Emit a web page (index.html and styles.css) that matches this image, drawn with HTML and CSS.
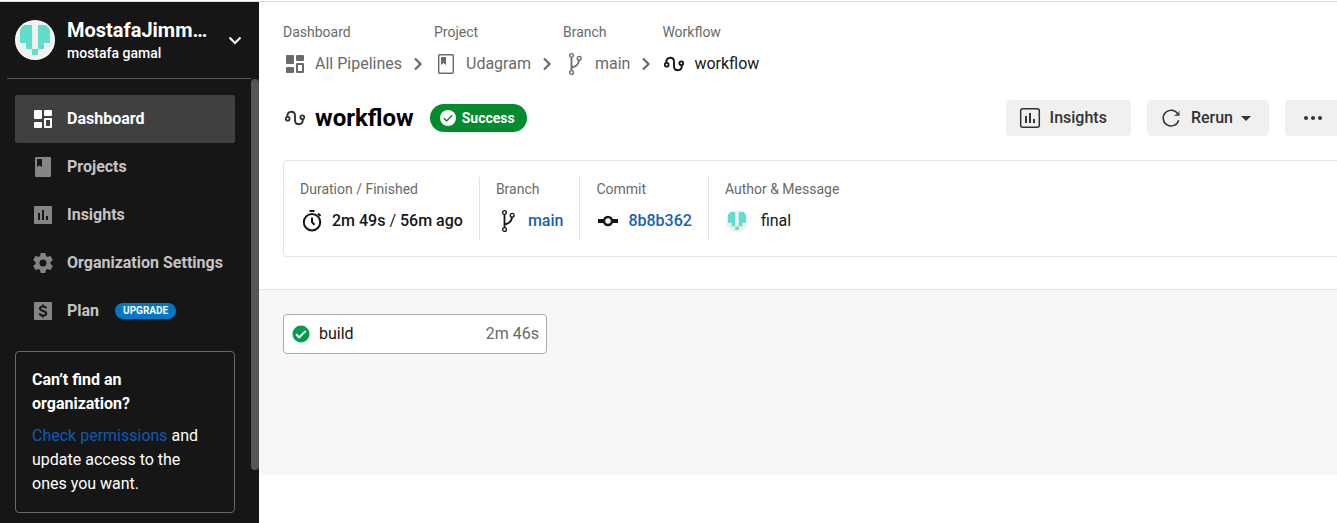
FILE: index.html
```html
<!DOCTYPE html>
<html lang="en">
<head>
<meta charset="utf-8">
<title>workflow - Udagram</title>
<link rel="stylesheet" href="styles.css">
</head>
<body>
<svg class="defs" aria-hidden="true">
  <symbol id="dashboard" viewBox="0 0 24 24"><path fill="currentColor" d="M4 3h6a1 1 0 0 1 1 1v7a1 1 0 0 1-1 1H4a1 1 0 0 1-1-1V4a1 1 0 0 1 1-1zm10 0h6a1 1 0 0 1 1 1v4a1 1 0 0 1-1 1h-6a1 1 0 0 1-1-1V4a1 1 0 0 1 1-1zM4 15h6a1 1 0 0 1 1 1v4a1 1 0 0 1-1 1H4a1 1 0 0 1-1-1v-4a1 1 0 0 1 1-1z"/><path fill="currentColor" fill-rule="evenodd" d="M14 11h6a1 1 0 0 1 1 1v8a1 1 0 0 1-1 1h-6a1 1 0 0 1-1-1v-8a1 1 0 0 1 1-1zm1 2v6h4v-6z"/></symbol>
  <symbol id="project-solid" viewBox="0 0 24 24"><path fill="currentColor" fill-rule="evenodd" d="M5 2h14a1 1 0 0 1 1 1v18a1 1 0 0 1-1 1H5a1 1 0 0 1-1-1V3a1 1 0 0 1 1-1zm1 2v8l2.500-1.500L11 12V4z"/></symbol>
  <symbol id="project" viewBox="0 0 24 24"><rect x="4.700" y="2.700" width="14.600" height="18.600" rx="1" fill="none" stroke="currentColor" stroke-width="1.400"/><path fill="currentColor" d="M7 5h5v8l-2.500-2L7 13z"/></symbol>
  <symbol id="chart-solid" viewBox="0 0 24 24"><path fill="currentColor" fill-rule="evenodd" d="M4 3h16a1 1 0 0 1 1 1v16a1 1 0 0 1-1 1H4a1 1 0 0 1-1-1V4a1 1 0 0 1 1-1zm3 7v7h2v-7zm4-3v10h2V7zm4 6v4h2v-4z"/></symbol>
  <symbol id="chart" viewBox="0 0 24 24"><rect x="2.700" y="2.700" width="18.600" height="18.600" rx="2" fill="none" stroke="currentColor" stroke-width="1.500"/><path fill="currentColor" d="M7 10h2v7H7zm4-3h2v10h-2zm4 6h2v4h-2z"/></symbol>
  <symbol id="gear" viewBox="0 0 24 24"><path fill="currentColor" d="M19.430 12.980c.04-.32.07-.64.07-.98s-.03-.66-.07-.98l2.110-1.650c.19-.15.24-.42.12-.64l-2-3.460c-.12-.22-.39-.3-.61-.22l-2.490 1c-.52-.4-1.080-.73-1.690-.98l-.38-2.650A.49.49 0 0 0 14 2h-4c-.25 0-.46.18-.49.42l-.38 2.650c-.61.25-1.170.59-1.690.98l-2.490-1c-.23-.09-.49 0-.61.22l-2 3.460c-.13.22-.07.49.12.64l2.110 1.650c-.04.32-.07.65-.07.98s.03.66.07.98l-2.110 1.650c-.19.15-.24.42-.12.64l2 3.460c.12.22.39.3.61.22l2.490-1c.52.4 1.080.73 1.690.98l.38 2.650c.03.24.24.42.49.42h4c.25 0 .46-.18.49-.42l.38-2.650c.61-.25 1.170-.59 1.690-.98l2.490 1c.23.09.49 0 .61-.22l2-3.460c.12-.22.07-.49-.12-.64zM12 15.500a3.500 3.500 0 1 1 0-7 3.500 3.500 0 0 1 0 7z"/></symbol>
  <symbol id="plan" viewBox="0 0 24 24"><rect x="3" y="3" width="18" height="18" rx="1" fill="currentColor"/><path fill="none" stroke="#161616" stroke-width="2" d="M15 9.500C15 8 13.800 7.400 12 7.400S9 8.200 9 9.600C9 12.800 15.200 11 15.200 14.300c0 1.500-1.400 2.300-3.200 2.300s-3.200-.8-3.200-2.400M12 5.500v2m0 9v2"/></symbol>
  <symbol id="chevron-right" viewBox="0 0 24 24"><path fill="none" stroke="currentColor" stroke-width="2.200" d="M9 6.500l5.500 5.500L9 17.500"/></symbol>
  <symbol id="branch" viewBox="0 0 24 24"><g fill="none" stroke="currentColor"><g stroke-width="1.400"><circle cx="8.500" cy="3.500" r="1.900"/><circle cx="8.500" cy="20.500" r="1.900"/><circle cx="16.200" cy="6.300" r="1.900"/></g><path stroke-width="1.800" d="M8.500 5.500v13M8.500 15.500c4.500-.8 7.200-2.800 7.500-7.200"/></g></symbol>
  <symbol id="workflow" viewBox="0 0 24 24"><g fill="none" stroke="currentColor"><g stroke-width="1.800"><circle cx="4.700" cy="12.800" r="1.900"/><circle cx="19.300" cy="11.200" r="1.900"/></g><path stroke-width="1.900" d="M4.200 11C4.300 7.600 6 5.700 8.300 5.700c2.300 0 3.700 1.500 3.700 4v4.600c0 2.500 1.500 4 3.900 4 2.500 0 4-2 4-5.300"/></g></symbol>
  <symbol id="rerun" viewBox="0 0 24 24"><path fill="none" stroke="currentColor" stroke-width="1.500" d="M19.700 14.300a7.900 7.900 0 1 1-.8-6.300"/><path fill="currentColor" d="M20.500 4.200v5.600h-5.600l2.300-1.600 1.600.2z"/></symbol>
  <symbol id="timer" viewBox="0 0 24 24"><circle cx="12" cy="13.200" r="8.200" fill="none" stroke="currentColor" stroke-width="2"/><path fill="none" stroke="currentColor" stroke-width="2" d="M9.500 2h5M18 4.500l2.500 2.500M12 8.500V13l2.500 2.800"/></symbol>
  <symbol id="commit" viewBox="0 0 24 24"><path stroke="currentColor" stroke-width="4" d="M2 12h6m8 0h6"/><circle cx="12" cy="12" r="4" fill="none" stroke="currentColor" stroke-width="2.500"/></symbol>
  <symbol id="avatar" viewBox="0 0 40 40"><circle cx="20" cy="20" r="20" fill="#fff"/><circle cx="20" cy="20" r="18.700" fill="#f0f0f0"/><path fill="#60ddcb" d="M9 5h8v24h-6v-6H5V11c0-2 2-4 4-6zM31 5h-8v24h6v-6h6V11c0-2-2-4-4-6zM17 29h6v6h-6z"/></symbol>
</svg>

<div class="app">
  <aside class="sidebar">
    <button class="org" type="button">
      <svg class="avatar"><use href="#avatar"/></svg>
      <span class="org-text"><span class="org-name">MostafaJimm…</span><span class="org-user">mostafa gamal</span></span>
      <svg class="org-arrow" viewBox="0 0 16 16"><path d="M2.500 5.500L8 11l5.500-5.500" fill="none" stroke="currentColor" stroke-width="2"/></svg>
    </button>
    <div class="side-scroll">
      <div class="side-content">
        <nav class="nav">
          <a class="nav-item active" href="#"><svg class="icon"><use href="#dashboard"/></svg>Dashboard</a>
          <a class="nav-item" href="#"><svg class="icon"><use href="#project-solid"/></svg>Projects</a>
          <a class="nav-item" href="#"><svg class="icon"><use href="#chart-solid"/></svg>Insights</a>
          <a class="nav-item" href="#"><svg class="icon"><use href="#gear"/></svg>Organization Settings</a>
          <a class="nav-item" href="#"><svg class="icon"><use href="#plan"/></svg>Plan<span class="upgrade">UPGRADE</span></a>
        </nav>
        <section class="notice">
          <h2 class="notice-title">Can’t find an organization?</h2>
          <p class="notice-text"><a class="notice-link" href="#">Check permissions</a> and update access to the ones you want.</p>
        </section>
      </div>
      <div class="scrollbar"><div class="thumb"></div></div>
    </div>
  </aside>

  <main class="main">
    <div class="head">
      <nav class="crumbs">
        <div class="crumb"><span class="label">Dashboard</span><a class="crumb-link" href="#"><svg class="icon"><use href="#dashboard"/></svg>All Pipelines</a></div>
        <svg class="icon sep"><use href="#chevron-right"/></svg>
        <div class="crumb"><span class="label">Project</span><a class="crumb-link" href="#"><svg class="icon"><use href="#project"/></svg>Udagram</a></div>
        <svg class="icon sep"><use href="#chevron-right"/></svg>
        <div class="crumb"><span class="label">Branch</span><a class="crumb-link" href="#"><svg class="icon"><use href="#branch"/></svg>main</a></div>
        <svg class="icon sep"><use href="#chevron-right"/></svg>
        <div class="crumb"><span class="label">Workflow</span><a class="crumb-link current" href="#"><svg class="icon"><use href="#workflow"/></svg>workflow</a></div>
      </nav>

      <div class="title-row">
        <svg class="icon title-icon"><use href="#workflow"/></svg>
        <h1 class="title">workflow</h1>
        <span class="status"><svg class="status-icon" viewBox="0 0 16 16"><circle cx="8" cy="8" r="8" fill="#fff"/><path d="M3.800 8.200l2.800 2.800 5.600-5.700" fill="none" stroke="#048a2f" stroke-width="1.500"/></svg>Success</span>
        <div class="actions">
          <button class="btn" type="button"><svg class="icon"><use href="#chart"/></svg>Insights</button>
          <button class="btn menu" type="button"><svg class="icon"><use href="#rerun"/></svg>Rerun<span class="caret"></span></button>
          <button class="btn more" type="button" aria-label="More"><svg class="icon" viewBox="0 0 24 24"><g fill="currentColor"><circle cx="5" cy="12" r="2"/><circle cx="12" cy="12" r="2"/><circle cx="19" cy="12" r="2"/></g></svg></button>
        </div>
      </div>

      <section class="summary">
        <div class="cell"><span class="label">Duration / Finished</span><span class="value strong"><svg class="icon"><use href="#timer"/></svg><span>2m 49s <span class="slash">/</span> 56m ago</span></span></div>
        <div class="cell"><span class="label">Branch</span><a class="value link" href="#"><svg class="icon"><use href="#branch"/></svg>main</a></div>
        <div class="cell"><span class="label">Commit</span><a class="value link" href="#"><svg class="icon"><use href="#commit"/></svg>8b8b362</a></div>
        <div class="cell"><span class="label">Author &amp; Message</span><span class="value author"><svg class="icon"><use href="#avatar"/></svg>final</span></div>
      </section>
    </div>

    <section class="jobs">
      <a class="job" href="#"><svg class="job-icon" viewBox="0 0 18 18"><circle cx="9" cy="9" r="8.500" fill="#049b4a"/><path d="M4 9.300l3.200 3.100 6.500-6.500" fill="none" stroke="#fff" stroke-width="2"/></svg>build<span class="job-time">2m 46s</span></a>
    </section>
  </main>
</div>
</body>
</html>
```
FILE: styles.css
```css
* { box-sizing: border-box; }

body {
  margin: 0;
  overflow: hidden;
  background: #fff;
  color: #161616;
  font: 400 16px/24px Roboto, sans-serif;
}

a { color: inherit; text-decoration: none; }
button { border: 0; font: inherit; text-align: left; }
.defs { display: none; }
.icon { width: 24px; height: 24px; flex: none; }

.app {
  display: flex;
  height: 100vh;
  padding-top: 2px;
  background: linear-gradient(#fff 1px, #dadce0 1px, #dadce0 2px, transparent 2px);
}

/* Sidebar */
.sidebar {
  display: flex;
  flex-direction: column;
  flex: none;
  width: 259px;
  background: #161616;
  color: #fff;
}

.org {
  display: flex;
  align-items: center;
  flex: none;
  height: 77px;
  margin: 0 8px 0 7px;
  padding: 0 8px;
  border-bottom: 1px solid #555;
  background: none;
  color: #fff;
}
.avatar { width: 40px; height: 40px; flex: none; }
.org-text { display: flex; flex-direction: column; flex: 1; padding: 2px 0 0 12px; }
.org-name { font-size: 20px; font-weight: 700; line-height: 24px; }
.org-user { font-size: 14px; font-weight: 500; line-height: 22px; }
.org-arrow { width: 16px; height: 16px; flex: none; }

.side-scroll { display: flex; flex: 1; min-height: 0; }
.side-content { flex: 1; padding: 16px 16px 0 15px; }
.scrollbar { width: 8px; flex: none; }
.thumb { height: 88%; border-radius: 4px; background: #555; }

.nav-item {
  display: flex;
  align-items: center;
  height: 48px;
  padding: 0 8px 0 16px;
  border-radius: 2px;
  color: #c4c4c4;
  font-weight: 700;
  white-space: nowrap;
}
.nav-item .icon { margin-right: 12px; color: #858585; }
.nav-item.active { background: #404040; color: #fff; }
.nav-item.active .icon { color: #fff; }
.upgrade {
  margin-left: 16px;
  padding: 0 8px;
  border-radius: 8px;
  background: #0078ca;
  color: #fff;
  font-size: 10px;
  line-height: 16px;
}

.notice {
  margin-top: 16px;
  padding: 16px;
  border: 1px solid #6a6a6a;
  border-radius: 4px;
}
.notice-title { margin: 0 0 8px; font-size: 16px; font-weight: 700; }
.notice-text { margin: 0; }
.notice-link { color: #0a5cb5; }

/* Main column */
.main { flex: 1; min-width: 0; overflow: hidden; }
.head { padding: 20px 0 32px 24px; margin-right: -4px; border-bottom: 1px solid #e3e3e3; }
.label { color: #6a6a6a; font-size: 14px; line-height: 20px; white-space: nowrap; }

.crumbs { display: flex; align-items: flex-end; }
.crumb { display: flex; flex-direction: column; gap: 10px; }
.crumb-link { display: flex; align-items: center; gap: 8px; color: #6a6a6a; }
.crumb-link.current { color: #161616; }
.sep { margin: 0 4px; color: #6a6a6a; }

.title-row { display: flex; align-items: center; margin-top: 24px; }
.title-icon { margin-right: 8px; color: #333; }
.title { margin: 0; color: #000; font-size: 24px; font-weight: 700; }
.status {
  display: flex;
  align-items: center;
  gap: 6px;
  height: 28px;
  margin-left: 16px;
  padding: 0 12px 0 10px;
  border-radius: 14px;
  background: #048a2f;
  color: #fff;
  font-size: 14px;
  font-weight: 700;
}
.status-icon { width: 16px; height: 16px; }
.actions { display: flex; gap: 16px; margin-left: auto; }
.btn {
  display: flex;
  align-items: center;
  gap: 8px;
  height: 36px;
  padding: 0 24px 0 12px;
  border-radius: 4px;
  background: #f0f0f0;
  color: #333;
  font-weight: 500;
}
.btn.menu { padding-right: 18px; }
.btn.more { padding: 0 16px; }
.caret { border: 5px solid transparent; border-top-color: #333; border-bottom: 0; }

.summary {
  display: flex;
  margin-top: 24px;
  padding: 16px 0;
  border: 1px solid #e3e3e3;
  border-radius: 4px;
}
.cell { display: flex; flex-direction: column; gap: 8px; padding: 0 16px 7px; }
.cell + .cell { border-left: 1px solid #e3e3e3; }
.cell .label { line-height: 24px; }
.value { display: flex; align-items: center; gap: 8px; }
.strong { font-weight: 500; }
.slash { font-weight: 400; }
.link { color: #1a5fb4; font-weight: 500; }
.link .icon { color: #161616; }
.author { gap: 12px; }

.jobs { height: 185px; padding: 24px; background: #f7f7f7; }
.job {
  display: flex;
  align-items: center;
  width: 264px;
  height: 40px;
  padding: 0 7px 0 8px;
  border: 1px solid #aaa;
  border-radius: 4px;
  background: #fff;
}
.job-icon { width: 18px; height: 18px; margin-right: 9px; }
.job-time { margin-left: auto; color: #6a6a6a; }
```
